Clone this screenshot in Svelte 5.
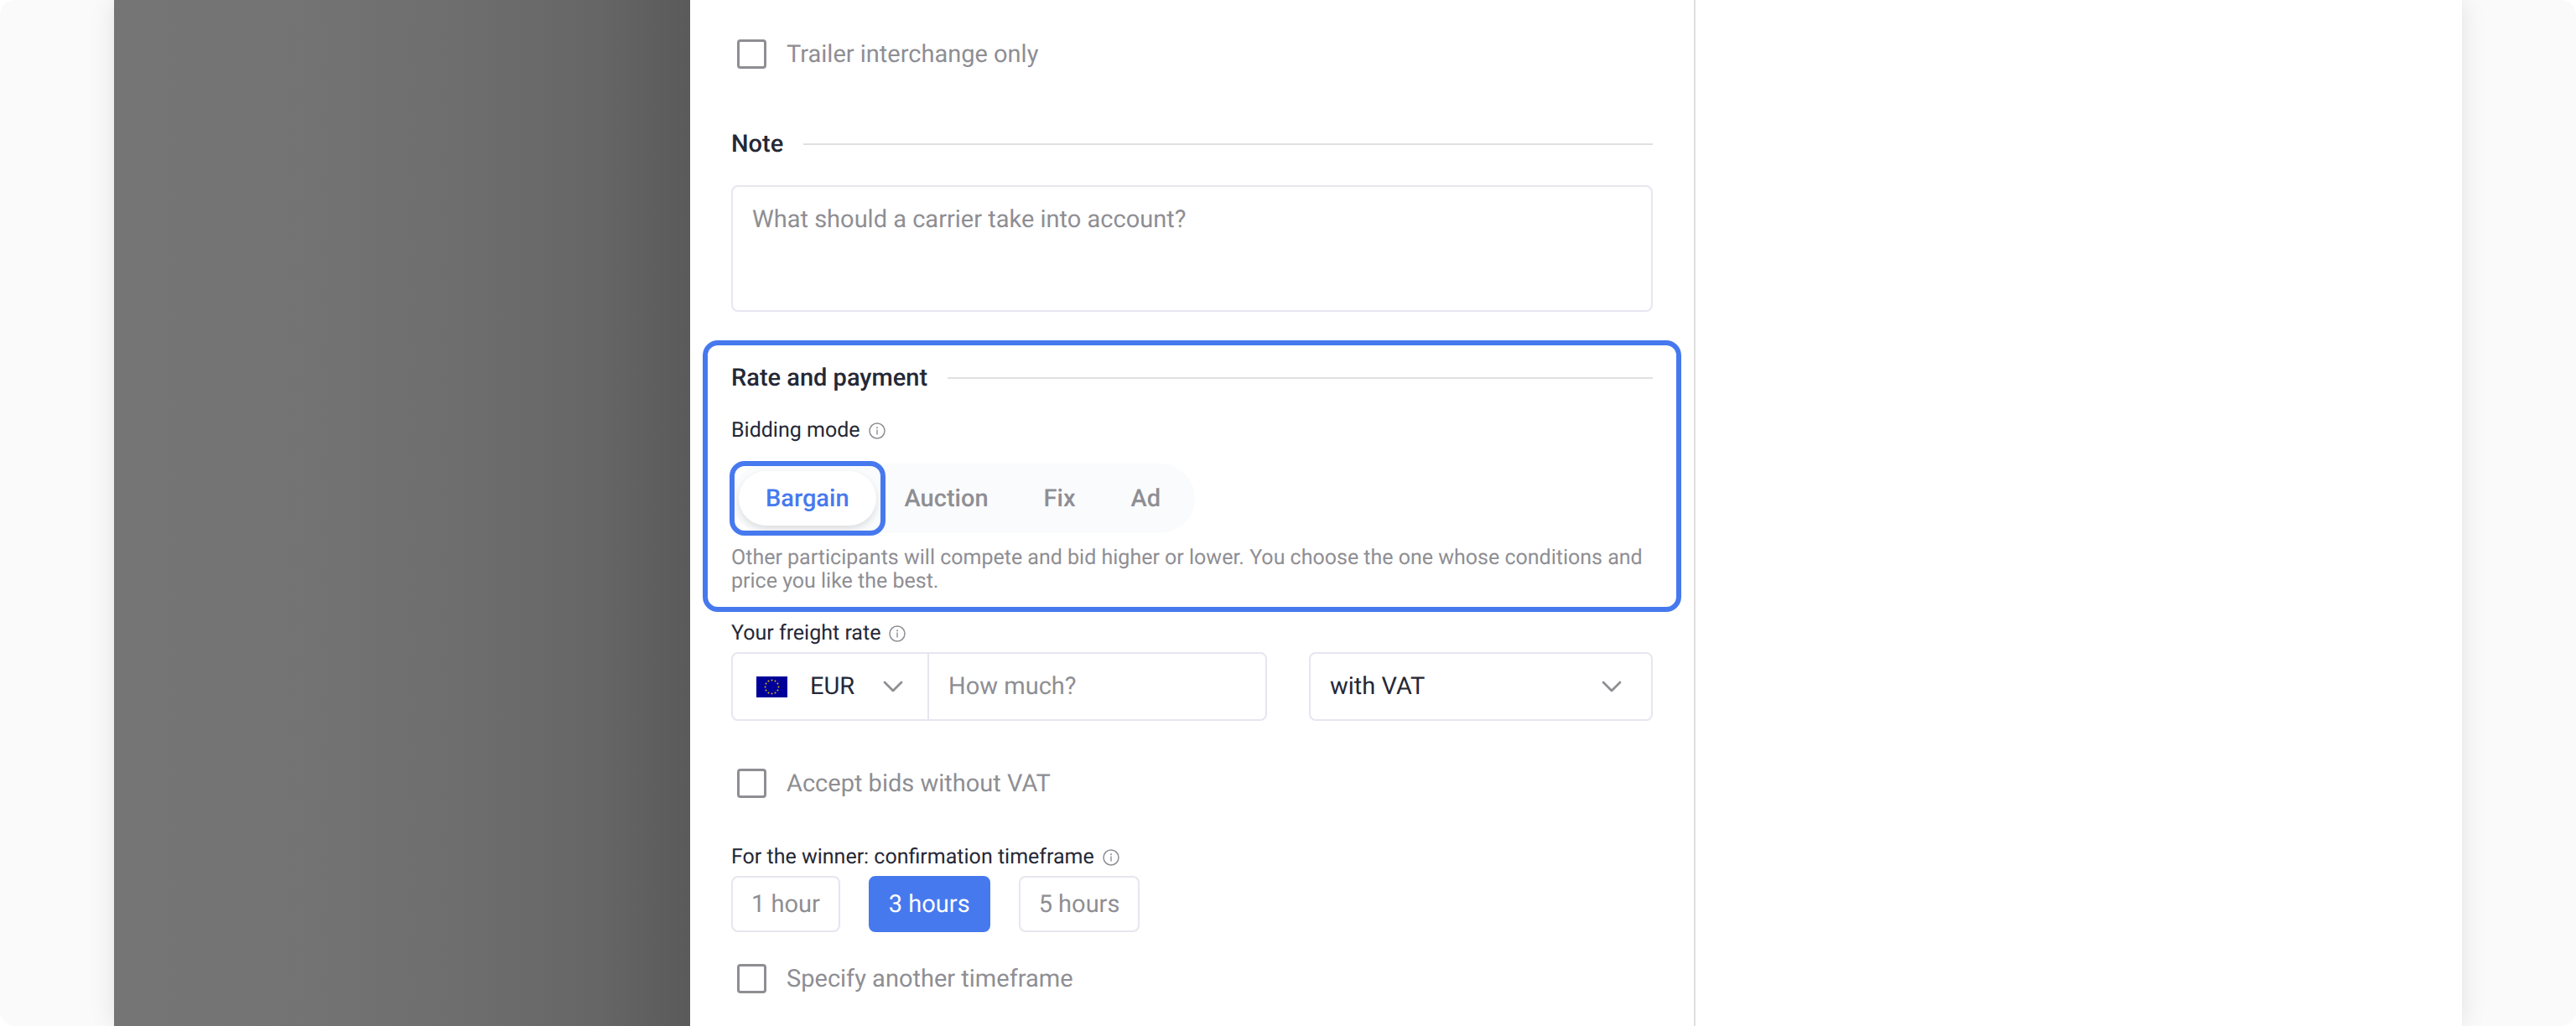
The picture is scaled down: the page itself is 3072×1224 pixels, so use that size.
<script>
    let interchange = $state(false);
    let withoutVat = $state(false);
    let anotherTimeframe = $state(false);
    let note = $state("");
    let amount = $state("");
    let currency = $state("EUR");
    let vat = $state("with VAT");
    let mode = $state("Bargain");
    let timeframe = $state("3 hours");

    const modes = ["Bargain", "Auction", "Fix", "Ad"];
    const timeframes = ["1 hour", "3 hours", "5 hours"];

    // Twelve stars of the flag, placed on a circle
    const stars = Array.from({ length: 12 }, (_, i) => {
        const angle = (i * Math.PI) / 6;
        return { x: 18.5 + 8 * Math.sin(angle), y: 12.5 - 8 * Math.cos(angle) };
    });
</script>

{#snippet info()}
    <svg class="info" viewBox="0 0 20 20" aria-hidden="true">
        <circle cx="10" cy="10" r="9" fill="none" stroke="#8e8e93" stroke-width="1.5" />
        <circle cx="10" cy="6.2" r="1" fill="#8e8e93" />
        <path d="M10 8.6v6" stroke="#8e8e93" stroke-width="1.4" />
    </svg>
{/snippet}

{#snippet chevron()}
    <svg class="chevron" viewBox="0 0 24 14" aria-hidden="true">
        <path d="M2 2l10 10L22 2" fill="none" stroke="#8e8e93" stroke-width="2.8" stroke-linecap="round" stroke-linejoin="round" />
    </svg>
{/snippet}

<div class="page">
    <div class="window">
        <div class="backdrop"></div>

        <form class="form">
            <label class="check">
                <input type="checkbox" bind:checked={interchange} />
                <span>Trailer interchange only</span>
            </label>

            <h2 class="heading note-heading">Note</h2>
            <textarea class="note" aria-label="Note" placeholder="What should a carrier take into account?" bind:value={note}></textarea>

            <section class="rate">
                <h2 class="heading">Rate and payment</h2>
                <div class="label mode-label">Bidding mode {@render info()}</div>
                <div class="tabs">
                    {#each modes as item}
                        <button type="button" class="tab" class:active={mode === item} onclick={() => (mode = item)}>{item}</button>
                    {/each}
                </div>
                <p class="hint">
                    Other participants will compete and bid higher or lower. You choose the one whose conditions and price you like the best.
                </p>
            </section>

            <label class="label freight-label" for="amount">Your freight rate {@render info()}</label>
            <div class="fields">
                <div class="field">
                    <div class="currency">
                        <svg class="flag" viewBox="0 0 37 25" aria-hidden="true">
                            <rect width="37" height="25" fill="#000099" />
                            {#each stars as star}
                                <circle cx={star.x} cy={star.y} r="1" fill="#d6b410" />
                            {/each}
                        </svg>
                        <select aria-label="Currency" bind:value={currency}>
                            <option>EUR</option>
                            <option>USD</option>
                        </select>
                        {@render chevron()}
                    </div>
                    <input id="amount" class="amount" type="text" placeholder="How much?" bind:value={amount} />
                </div>
                <div class="field vat">
                    <select aria-label="VAT" bind:value={vat}>
                        <option>with VAT</option>
                        <option>without VAT</option>
                    </select>
                    {@render chevron()}
                </div>
            </div>

            <label class="check vat-check">
                <input type="checkbox" bind:checked={withoutVat} />
                <span>Accept bids without VAT</span>
            </label>

            <div class="label winner-label">For the winner: confirmation timeframe {@render info()}</div>
            <div class="times">
                {#each timeframes as item}
                    <button type="button" class="time" class:chosen={timeframe === item} onclick={() => (timeframe = item)}>{item}</button>
                {/each}
            </div>

            <label class="check time-check">
                <input type="checkbox" bind:checked={anotherTimeframe} />
                <span>Specify another timeframe</span>
            </label>
        </form>
    </div>
</div>

<style>
    :global(body) {
        background: #fff;
        font-family: Roboto, "Liberation Sans", sans-serif;
        text-rendering: geometricPrecision;
    }

    .page, .page * {
        box-sizing: border-box;
    }

    .page {
        display: flex;
        min-height: 100vh;
        padding: 0 136px;
        background: #fafafa;
        border-radius: 18px;
        overflow: hidden;
        color: #252836;
        font-size: 29px;
        line-height: 34px;
    }

    .window {
        flex: 1;
        display: grid;
        grid-template-columns: 687fr 1199fr 914fr;
        background: #fff;
        box-shadow: 0 0 28px rgba(0, 0, 0, 0.1);
    }

    /* Dimmed page behind the drawer, darker next to its edge */
    .backdrop {
        background: linear-gradient(90deg, #757575 0%, #737373 35%, #6d6d6d 63%, #666 84%, #5a5a5a 100%);
    }

    .form {
        min-width: 0;
        padding: 47px 49px 39px;
        border-right: 2px solid #e0e0e0;
    }

    button, input, select, textarea {
        font: inherit;
        color: inherit;
        text-rendering: inherit;
    }

    button, select {
        cursor: pointer;
    }

    /* Checkboxes */
    .check {
        display: flex;
        align-items: center;
        gap: 24px;
        height: 35px;
        padding-left: 7px;
        color: #8e8e93;
    }

    .check input {
        appearance: none;
        width: 35px;
        height: 35px;
        margin: 0;
        border: 3px solid #8e8e93;
        border-radius: 4px;
    }

    .check input:checked {
        background: #4779ee;
        border-color: #4779ee;
    }

    .vat-check {
        margin-top: 57px;
    }

    .time-check {
        margin-top: 38px;
    }

    /* Section headings with a rule */
    .heading {
        display: flex;
        align-items: center;
        gap: 24px;
        margin: 0;
        font-size: 29px;
        font-weight: 500;
        line-height: 36px;
    }

    .heading::after {
        content: "";
        flex: 1;
        height: 2px;
        background: #e0e0e0;
    }

    .note-heading {
        margin: 72px 0 31px;
    }

    .note {
        display: block;
        width: 100%;
        height: 151px;
        padding: 22px 23px;
        border: 2px solid #e6e6ef;
        border-radius: 8px;
        background: #fff;
        resize: none;
    }

    ::placeholder {
        color: #8e8e93;
        opacity: 1;
    }

    /* Highlighted block */
    .rate {
        margin: 34px -34px 12px;
        padding: 21px 28px 16px;
        border: 6px solid #4779ee;
        border-radius: 18px;
    }

    .label {
        display: flex;
        align-items: center;
        gap: 10px;
        font-size: 25px;
        line-height: 28px;
    }

    .mode-label {
        margin: 31px 0 25px;
    }

    .freight-label {
        margin-bottom: 8px;
    }

    .winner-label {
        margin: 57px 0 8px;
    }

    .info {
        width: 20px;
        height: 20px;
    }

    .tabs {
        display: inline-flex;
        gap: 2px;
        padding: 9px;
        border-radius: 42px;
        background: #fafbfd;
        vertical-align: top;
    }

    .tab {
        position: relative;
        height: 65px;
        padding: 0 32px;
        border: 0;
        border-radius: 33px;
        background: none;
        color: #8e8e93;
        font-weight: 500;
    }

    .active {
        background: #fff;
        color: #4779ee;
        box-shadow: 0 4px 8px rgba(0, 0, 0, 0.12);
    }

    .active::after {
        content: "";
        position: absolute;
        inset: -12px -11px;
        border: 6px solid #4779ee;
        border-radius: 18px;
    }

    .hint {
        margin: 16px 0 0;
        color: #8e8e93;
        font-size: 25px;
        line-height: 28px;
    }

    /* Rate fields */
    .fields {
        display: grid;
        grid-template-columns: 639fr 410fr;
        gap: 50px;
    }

    .field {
        display: flex;
        height: 82px;
        border: 2px solid #e6e6ef;
        border-radius: 8px;
        min-width: 0;
    }

    .currency {
        display: flex;
        align-items: center;
        width: 234px;
        padding: 0 29px 0 28px;
        border-right: 2px solid #e6e6ef;
    }

    .flag {
        width: 37px;
        height: 25px;
        margin-right: 27px;
    }

    .chevron {
        width: 24px;
        height: 14px;
    }

    select {
        appearance: none;
        flex: 1;
        min-width: 0;
        height: 100%;
        padding: 0;
        border: 0;
        background: none;
    }

    .amount {
        flex: 1;
        min-width: 0;
        padding: 0 23px;
        border: 0;
        background: none;
    }

    .vat {
        align-items: center;
        padding: 0 35px 0 23px;
    }

    .times {
        display: flex;
        gap: 34px;
    }

    .time {
        height: 67px;
        padding: 0 22px;
        border: 2px solid #e6e6ef;
        border-radius: 8px;
        background: #fff;
        color: #8e8e93;
    }

    .chosen {
        border-color: #4779ee;
        background: #4779ee;
        color: #fff;
    }
</style>
